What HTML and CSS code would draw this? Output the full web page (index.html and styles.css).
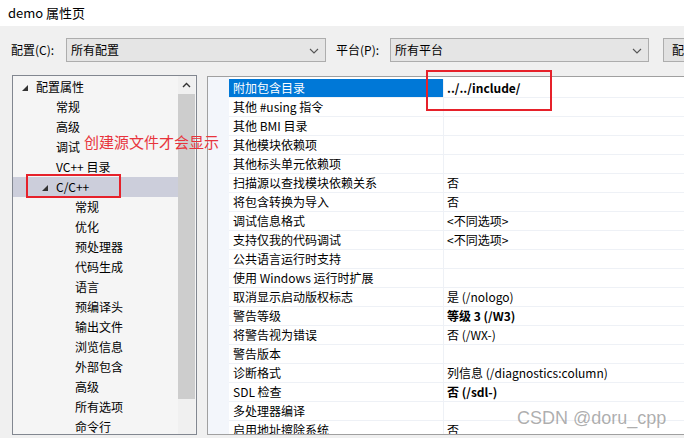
FILE: index.html
```html
<!DOCTYPE html>
<html lang="zh-CN">
	<head>
		<meta charset="UTF-8">
		<meta name="viewport" content="width=device-width, initial-scale=1">
		<title>demo 属性页</title>
		<link rel="stylesheet" href="styles.css">
	</head>
	<body>
		<div class="window">
			<div class="titlebar">demo 属性页</div>

			<div class="toolbar">
				<span class="label cfg-label">配置(C):</span>
				<div class="combo cfg-combo">
					<span>所有配置</span>
					<svg class="chev" width="10" height="6" viewBox="0 0 10 6"><polyline points="1,1 5,5 9,1" fill="none" stroke="#555" stroke-width="1.1"/></svg>
				</div>
				<span class="label plat-label">平台(P):</span>
				<div class="combo plat-combo">
					<span>所有平台</span>
					<svg class="chev" width="10" height="6" viewBox="0 0 10 6"><polyline points="1,1 5,5 9,1" fill="none" stroke="#555" stroke-width="1.1"/></svg>
				</div>
				<div class="btn">配置管理器(O)...</div>
			</div>

			<div class="main">
				<div class="tree-panel">
					<div class="tree">
						<div class="tw-row lvl0"><span class="tog"><svg width="6" height="6" viewBox="0 0 6 6"><polygon points="6,0 6,6 0,6" fill="#333"/></svg></span>配置属性</div>
						<div class="tw-row lvl1">常规</div>
						<div class="tw-row lvl1">高级</div>
						<div class="tw-row lvl1">调试</div>
						<div class="tw-row lvl1">VC++ 目录</div>
						<div class="tw-row lvl1 open selected"><span class="tog"><svg width="6" height="6" viewBox="0 0 6 6"><polygon points="6,0 6,6 0,6" fill="#333"/></svg></span>C/C++</div>
						<div class="tw-row lvl2">常规</div>
						<div class="tw-row lvl2">优化</div>
						<div class="tw-row lvl2">预处理器</div>
						<div class="tw-row lvl2">代码生成</div>
						<div class="tw-row lvl2">语言</div>
						<div class="tw-row lvl2">预编译头</div>
						<div class="tw-row lvl2">输出文件</div>
						<div class="tw-row lvl2">浏览信息</div>
						<div class="tw-row lvl2">外部包含</div>
						<div class="tw-row lvl2">高级</div>
						<div class="tw-row lvl2">所有选项</div>
						<div class="tw-row lvl2">命令行</div>
					</div>
					<div class="vscroll">
						<div class="sb-arrow">
							<svg width="9" height="6" viewBox="0 0 9 6"><polyline points="1,5 4.5,1.5 8,5" fill="none" stroke="#333" stroke-width="1.4"/></svg>
						</div>
						<div class="sb-thumb"></div>
					</div>
				</div>

				<div class="grid-panel">
					<div class="gutter"></div>
					<div class="props">
						<div class="pg-row selected"><div class="pg-name">附加包含目录</div><div class="pg-val bold">../../include/</div></div>
						<div class="pg-row"><div class="pg-name">其他 #using 指令</div><div class="pg-val"></div></div>
						<div class="pg-row"><div class="pg-name">其他 BMI 目录</div><div class="pg-val"></div></div>
						<div class="pg-row"><div class="pg-name">其他模块依赖项</div><div class="pg-val"></div></div>
						<div class="pg-row"><div class="pg-name">其他标头单元依赖项</div><div class="pg-val"></div></div>
						<div class="pg-row"><div class="pg-name">扫描源以查找模块依赖关系</div><div class="pg-val">否</div></div>
						<div class="pg-row"><div class="pg-name">将包含转换为导入</div><div class="pg-val">否</div></div>
						<div class="pg-row"><div class="pg-name">调试信息格式</div><div class="pg-val">&lt;不同选项&gt;</div></div>
						<div class="pg-row"><div class="pg-name">支持仅我的代码调试</div><div class="pg-val">&lt;不同选项&gt;</div></div>
						<div class="pg-row"><div class="pg-name">公共语言运行时支持</div><div class="pg-val"></div></div>
						<div class="pg-row"><div class="pg-name">使用 Windows 运行时扩展</div><div class="pg-val"></div></div>
						<div class="pg-row"><div class="pg-name">取消显示启动版权标志</div><div class="pg-val">是 (/nologo)</div></div>
						<div class="pg-row"><div class="pg-name">警告等级</div><div class="pg-val bold">等级 3 (/W3)</div></div>
						<div class="pg-row"><div class="pg-name">将警告视为错误</div><div class="pg-val">否 (/WX-)</div></div>
						<div class="pg-row"><div class="pg-name">警告版本</div><div class="pg-val"></div></div>
						<div class="pg-row"><div class="pg-name">诊断格式</div><div class="pg-val">列信息 (/diagnostics:column)</div></div>
						<div class="pg-row"><div class="pg-name">SDL 检查</div><div class="pg-val bold">否 (/sdl-)</div></div>
						<div class="pg-row"><div class="pg-name">多处理器编译</div><div class="pg-val"></div></div>
						<div class="pg-row"><div class="pg-name">启用地址擦除系统</div><div class="pg-val">否</div></div>
					</div>
				</div>
			</div>

			<!-- annotations drawn over the screenshot -->
			<div class="mark mark-tree"></div>
			<div class="mark mark-value"></div>
			<div class="note">创建源文件才会显示</div>
			<div class="watermark">CSDN @doru_cpp</div>
		</div>
	</body>
</html>
```

FILE: styles.css
```css
*{
	margin: 0;
	padding: 0;
	box-sizing: border-box;
}
html, body{
	width: 684px;
	height: 438px;
	overflow: hidden;
}
body{
	background: #f0f0f0;
	font-family: "Noto Sans CJK SC", "Noto Sans", sans-serif;
	font-size: 12px;
	color: #000;
}
.window{
	position: relative;
	width: 684px;
	height: 438px;
}
.titlebar{
	height: 26px;
	background: #fff;
	padding-left: 8px;
	font-size: 13px;
	line-height: 25px;
}

/* toolbar */
.toolbar{
	display: flex;
	align-items: center;
	height: 49px;
	padding-bottom: 1px;
	white-space: nowrap;
}
.toolbar > *{
	flex-shrink: 0;
}
.label{
	line-height: 24px;
}
.cfg-label{
	margin-left: 11px;
	width: 55px;
}
.plat-label{
	margin-left: 10px;
	width: 54px;
}
.combo{
	display: flex;
	align-items: center;
	justify-content: space-between;
	height: 24px;
	background: #e5e5e5;
	border: 1px solid #adadad;
	padding: 0 6px 0 4px;
	line-height: 22px;
}
.cfg-combo{
	width: 260px;
}
.plat-combo{
	width: 259px;
}
.chev{
	margin-top: 1px;
}
.btn{
	margin-left: 14px;
	height: 24px;
	margin-top: -1px;
	background: #e1e1e1;
	border: 1px solid #adadad;
	padding: 0 8px;
	line-height: 22px;
}

/* tree on the left */
.main{
	display: flex;
	align-items: flex-start;
}
.main > *{
	flex-shrink: 0;
}
.tree-panel{
	display: flex;
	margin-left: 12px;
	width: 185px;
	height: 360px;
	background: #f5f5f5;
	border: 1px solid #828790;
	overflow: hidden;
}
.tree{
	flex: 1;
	padding-top: 1px;
	white-space: nowrap;
}
.tw-row{
	display: flex;
	align-items: center;
	height: 20px;
	line-height: 20px;
}
.tog{
	width: 14px;
	display: flex;
	align-items: center;
	padding-top: 2px;
}
.lvl0{
	padding-left: 9px;
}
.lvl1{
	padding-left: 43px;
}
.lvl1.open{
	padding-left: 29px;
}
.lvl2{
	padding-left: 62px;
}
.tw-row.selected{
	background: #cccedb;
}
.vscroll{
	width: 17px;
	flex-shrink: 0;
	display: flex;
	flex-direction: column;
	background: #f0f0f0;
	margin-right: 1px;
}
.sb-arrow{
	height: 18px;
	display: flex;
	align-items: center;
	justify-content: center;
}
.sb-thumb{
	height: 305px;
	background: #cdcdcd;
}

/* property grid */
.grid-panel{
	display: flex;
	margin-left: 10px;
	margin-top: 1px;
	width: 500px;
	height: 359px;
	background: #fff;
	border: 1px solid #a0a0a0;
	overflow: hidden;
}
.gutter{
	width: 21px;
	flex-shrink: 0;
	background: #f3f6fb;
}
.props{
	flex: 1;
	padding-top: 2px;
}
.pg-row{
	display: flex;
	height: 19px;
	border-bottom: 1px solid #eef1f6;
	white-space: nowrap;
}
.pg-name{
	width: 214px;
	flex-shrink: 0;
	padding-left: 4px;
	line-height: 18px;
}
.pg-val{
	flex: 1;
	border-left: 1px solid #eef1f6;
	padding-left: 3px;
	line-height: 18px;
}
.bold{
	font-weight: bold;
}
.pg-row.selected .pg-name{
	background: #0078d7;
	color: #fff;
}

/* red annotations and watermark */
.mark{
	position: absolute;
	border: 2px solid #e6212a;
}
.mark-tree{
	left: 26px;
	top: 174px;
	width: 95px;
	height: 24px;
}
.mark-value{
	left: 426px;
	top: 70px;
	width: 126px;
	height: 41px;
}
.note{
	position: absolute;
	left: 84px;
	top: 131px;
	font-size: 15px;
	line-height: 22px;
	color: #e8343c;
	white-space: nowrap;
}
.watermark{
	position: absolute;
	left: 517px;
	top: 406px;
	font-family: "Liberation Sans", Arial, sans-serif;
	font-size: 18px;
	line-height: 24px;
	color: rgba(120, 120, 120, 0.6);
	white-space: nowrap;
}
```
